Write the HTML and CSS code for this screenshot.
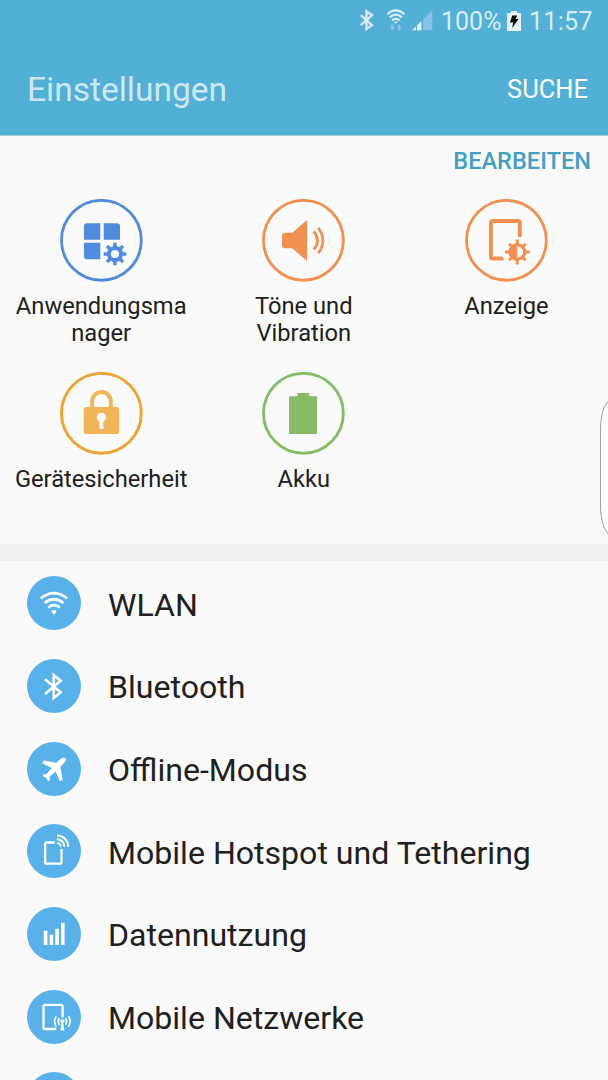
FILE: index.html
```html
<!DOCTYPE html>
<html lang="de">
<head>
<meta charset="utf-8">
<title>Einstellungen</title>
<link rel="stylesheet" href="styles.css">
</head>
<body>
<div class="screen">
  <header class="header">
    <div class="status">
      <svg class="status-icons" viewBox="356 0 80 42" width="80" height="42">
        <path d="M360.8 15.2L372 25.2L366.5 29V11.2L372 15L360.8 25.2" class="line" stroke-width="2.3"/>
        <g class="line" stroke-width="2.1">
          <path d="M387.2 14.2Q395.8 6.7 404.4 14.2M389.6 17.4Q395.8 12 402 17.4M392 20.4Q395.8 17.2 399.6 20.4"/>
        </g>
        <path d="M393.8 21.6h4l-2 2z" class="solid"/>
        <path d="M391.2 24.3h2.3v3h1.7l-2.9 3.3-2.9-3.3h1.8zM398 30.5h2.3v-3h1.7l-2.9-3.3-2.9 3.3h1.9z" class="faint"/>
        <path d="M423.2 19.3L432.3 10v20.3h-9.1z" class="faint"/>
        <path d="M412.2 30.3l3.7-3.7v3.7zM417 25.4l4.3-4.4v9.3h-4.3z" class="solid"/>
      </svg>
      <span class="percent">100%</span>
      <svg class="battery" viewBox="0 0 14 20" width="14" height="20">
        <path d="M4 0h6v2h4v18H0V2h4z" fill="#e5f3f9"/>
        <path d="M5.2 4.4h5L8.6 8h2.9L5 17.2l1.3-5.6H3z" fill="#000"/>
      </svg>
      <time class="clock">11:57</time>
    </div>
    <div class="titlebar">
      <h1 class="title">Einstellungen</h1>
      <span class="search">SUCHE</span>
    </div>
  </header>

  <section class="quick">
    <div class="edit"><span>BEARBEITEN</span></div>
    <div class="grid">
      <div class="tile">
        <svg class="tile-icon blue" viewBox="0 0 83 83">
          <circle class="ring" cx="41.4" cy="41.3" r="39.9"/>
          <path d="M27 24.2h13.3v16.6H24V27.2a3 3 0 0 1 3-3zM43.7 24.2H57a3 3 0 0 1 3 3v13.6H43.7zM24 43.7h16.3v16.6H27a3 3 0 0 1-3-3z"/>
          <circle class="cut" cx="55" cy="55" r="10"/>
          <circle cx="55" cy="55" r="6" fill="none" stroke="currentColor" stroke-width="4"/>
          <path class="teeth" d="M55 48v-4.3M55 62v4.3M48 55h-4.3M62 55h4.3M50 50l-3-3M60 60l3 3M50 60l-3 3M60 50l3-3" stroke-width="3.4"/>
        </svg>
        <span class="label">Anwendungsma<br>nager</span>
      </div>
      <div class="tile">
        <svg class="tile-icon orange" viewBox="0 0 83 83">
          <circle class="ring" cx="41.4" cy="41.3" r="39.9"/>
          <path d="M23 33.7h7.3L45 21v41L30.3 49.3H23a3 3 0 0 1-3-3v-9.6a3 3 0 0 1 3-3z"/>
          <path d="M51.8 32.3Q59 41.5 51.8 50.7M56.2 28.8Q65.6 41.5 56.2 54.2" fill="none" stroke="currentColor" stroke-width="2.8"/>
        </svg>
        <span class="label">Töne und<br>Vibration</span>
      </div>
      <div class="tile">
        <svg class="tile-icon orange" viewBox="0 0 83 83">
          <circle class="ring" cx="41.4" cy="41.3" r="39.9"/>
          <path d="M54.8 38V24a2 2 0 0 0-2-2H27.9a2 2 0 0 0-2 2v33.5a2 2 0 0 0 2 2H37.6" fill="none" stroke="currentColor" stroke-width="3.9"/>
          <path d="M37.6 57.6l1.6 3.7h-2z"/>
          <circle cx="52.3" cy="53" r="7.4" fill="none" stroke="currentColor" stroke-width="3.2"/>
          <path d="M52.3 45a8 8 0 0 0 0 16z"/>
          <path class="teeth" d="M52.3 45v-4.4M52.3 61v4.4M44.3 53h-4.4M60.3 53h4.4M47 47.7l-3-3M57.6 58.3l3 3M47 58.3l-3 3M57.6 47.7l3-3" stroke-width="2.9"/>
        </svg>
        <span class="label">Anzeige</span>
      </div>
      <div class="tile">
        <svg class="tile-icon amber" viewBox="0 0 83 83">
          <circle class="ring" cx="41.4" cy="41.3" r="39.9"/>
          <path d="M32.2 36v-6.7a9.3 9.3 0 0 1 18.6 0V36" fill="none" stroke="#f1b559" stroke-width="4"/>
          <rect x="23.7" y="35" width="35.6" height="27" rx="3.2" fill="#f1b559"/>
          <circle class="cut" cx="41.4" cy="45.3" r="4.6"/>
          <path class="cut" d="M39.5 47h3.8v10h-3.8z"/>
        </svg>
        <span class="label">Gerätesicherheit</span>
      </div>
      <div class="tile">
        <svg class="tile-icon green" viewBox="0 0 83 83">
          <circle class="ring" cx="41.4" cy="41.3" r="39.9"/>
          <path d="M35.3 21h11.9v3.2H55V62H27V24.2h8.3z"/>
        </svg>
        <span class="label">Akku</span>
      </div>
    </div>
    <div class="edge-handle"></div>
  </section>

  <ul class="list">
    <li class="row">
      <svg class="row-icon" viewBox="0 0 54 54">
        <path class="line" stroke-width="2.8" d="M13.8 22.4Q27 11.8 40.2 22.4M17.6 27Q27 19.4 36.4 27M21.2 31.5Q27 26.4 32.8 31.5"/>
        <path class="solid" d="M24.5 34.8q2.5-1.8 5 0 .3 1.4-2.5 4-2.7-2.6-2.5-4z"/>
      </svg>
      <span class="name">WLAN</span>
    </li>
    <li class="row">
      <svg class="row-icon" viewBox="0 0 54 54">
        <path class="line" stroke-width="2.6" d="M18 20.2L33.6 33.2L26.7 39V16L33.6 21.8L18 35"/>
      </svg>
      <span class="name">Bluetooth</span>
    </li>
    <li class="row">
      <svg class="row-icon" viewBox="0 0 54 54">
        <path class="solid" d="M38.7 16.2C39.3 17.8 38.3 19.5 37 21L33.4 25L35.7 38.2L33 39.3L28.6 29.6L22.7 34.8L22.8 38L21.2 39.4L19.3 35.8L15.4 34L16.6 32.4L19.6 32L24.8 25.9L15.3 21.2L16.6 18.4L29.2 20.8L33.2 17.2C34.8 16 37.2 15.4 38.7 16.2z"/>
      </svg>
      <span class="name">Offline-Modus</span>
    </li>
    <li class="row">
      <svg class="row-icon" viewBox="0 0 54 54">
        <path class="line" stroke-width="2.3" d="M27.8 18.5H19.6a1.5 1.5 0 0 0-1.500 1.500V38.200a1.500 1.500 0 0 0 1.500 1.500H33a1.500 1.500 0 0 0 1.500-1.500V25"/>
        <path class="line" stroke-width="2" d="M30 11.600a11 11 0 0 1 11.200 11.200M30 15.300a7.500 7.500 0 0 1 7.500 7.500M30 19a3.800 3.800 0 0 1 3.800 3.800"/>
      </svg>
      <span class="name">Mobile Hotspot und Tethering</span>
    </li>
    <li class="row">
      <svg class="row-icon" viewBox="0 0 54 54">
        <path class="solid" d="M16.800 23.700h3.600V38h-3.600zM22.600 27.700h3.600V38h-3.600zM28.300 21.700h3.600V38h-3.600zM34 16h3.600v22H34z"/>
      </svg>
      <span class="name">Datennutzung</span>
    </li>
    <li class="row">
      <svg class="row-icon" viewBox="0 0 54 54">
        <path class="line" stroke-width="2.300" d="M35.600 27.500V16.300a1.500 1.500 0 0 0-1.500-1.500H18a1.500 1.500 0 0 0-1.500 1.500V37.500a1.500 1.500 0 0 0 1.500 1.500H29.300"/>
        <circle class="solid" cx="35.400" cy="31.300" r="2"/>
        <path class="solid" d="M34.600 32h1.600l1.200 8.400h-4z"/>
        <path class="line" stroke-width="1.600" d="M32.300 28.200q-2.100 3.200 0 6.600M38.500 28.200q2.100 3.200 0 6.600M29.300 26.300q-3.400 5.200 0 10.500M41.500 26.300q3.400 5.200 0 10.500"/>
      </svg>
      <span class="name">Mobile Netzwerke</span>
    </li>
    <li class="row">
      <svg class="row-icon" viewBox="0 0 54 54"></svg>
    </li>
  </ul>
</div>
</body>
</html>
```
FILE: styles.css
```css
* {
  box-sizing: border-box;
}

body {
  margin: 0;
  background: #fafafa;
  font-family: Roboto, "Noto Sans", sans-serif;
  color: #202020;
}

.screen {
  width: 608px;
  height: 1080px;
  overflow: hidden;
}

.header {
  height: 136px;
  background: #52afd5;
  border-bottom: 1px solid #a9cddd;
}

.status {
  display: flex;
  align-items: center;
  height: 42px;
  padding-left: 356px;
  font-size: 25px;
  color: #d8edf6;
}

.line {
  fill: none;
  stroke: #d8edf6;
}

.solid {
  fill: #e5f3f9;
}

.faint {
  fill: #86c3e8;
}

.percent {
  width: 71px;
  padding: 1px 0 0 5px;
}

.battery {
  flex: none;
  margin-right: 8px;
}

.clock {
  padding-top: 1px;
  letter-spacing: 0.3px;
}

.titlebar {
  display: flex;
  align-items: center;
  justify-content: space-between;
  height: 93px;
  padding: 0 20px 0 27px;
}

.title {
  margin: 2px 0 0;
  font-size: 33.5px;
  font-weight: 400;
  color: #cde8f3;
}

.search {
  margin-top: 1px;
  font-size: 25.5px;
  color: #fff;
}

.quick {
  position: relative;
  height: 425px;
  border-bottom: 17px solid #efefef;
}

.edit {
  height: 63px;
  padding: 10px 17px 0 0;
  text-align: right;
  font-size: 23.6px;
  font-weight: 500;
  line-height: 31px;
  color: #459fc0;
}

.grid {
  display: grid;
  grid-template-columns: 202.4px 202.8px 202.4px;
  grid-auto-rows: 173px;
}

.tile {
  display: flex;
  flex-direction: column;
  align-items: center;
}

.tile-icon {
  width: 83px;
  height: 83px;
  fill: currentColor;
}

.ring {
  fill: none;
  stroke: currentColor;
  stroke-width: 2.9px;
}

.teeth {
  fill: none;
  stroke: currentColor;
}

.cut {
  fill: #fafafa;
}

.blue { color: #518bdd; }
.orange { color: #f19051; }
.amber { color: #eba332; }
.green { color: #86bc67; }

.label {
  margin-top: 11px;
  font-size: 23.7px;
  line-height: 27px;
  text-align: center;
}

.edge-handle {
  position: absolute;
  top: 264px;
  right: -22px;
  width: 30.5px;
  height: 135px;
  border: 1px solid #a0a0a0;
  border-radius: 11px / 30px;
  background: #fff;
}

.list {
  margin: 0;
  padding: 0.8px 0 0;
  list-style: none;
}

.row {
  display: flex;
  align-items: center;
  gap: 27px;
  height: 82.7px;
  padding-left: 27px;
}

.row-icon {
  width: 54px;
  height: 54px;
  border-radius: 50%;
  background: #58b1e8;
}

.row-icon .line {
  stroke: #fff;
}

.row-icon .solid {
  fill: #fff;
}

.name {
  margin-top: 3px;
  font-size: 32.1px;
}
```
